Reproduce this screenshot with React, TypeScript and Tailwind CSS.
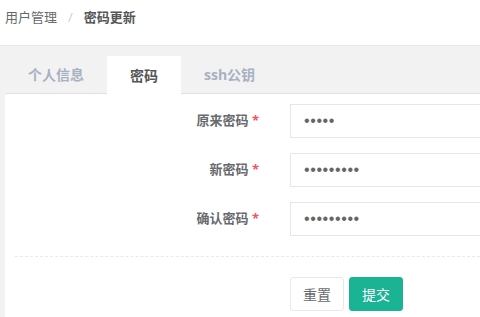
import React from 'react';

const font = { fontFamily: '"Open Sans", "Noto Sans CJK SC", sans-serif' };

const fields = [
    { label: '原来密码', value: '12345' },
    { label: '新密码', value: '123456789' },
    { label: '确认密码', value: '123456789' },
];

export default function App() {
    return (
        <div className="h-[317px] w-[480px] overflow-hidden bg-[#f2f2f2] text-[13px] text-[#676a6c]" style={font}>
            <div className="flex h-[46px] items-center border-b border-[#e7eaec] bg-white pb-[10px] pl-[5px]">
                <span className="text-[#676a6c]">用户管理</span>
                <span className="mx-[11px] text-[#ccc]">/</span>
                <span className="font-bold text-[#555]">密码更新</span>
            </div>
            <div className="pt-[10px]">
                <div className="ml-[5px] flex h-[38px] border-b border-[#e1e1e1]">
                    {['个人信息', '密码', 'ssh公钥'].map((tab) => (
                        <div
                            key={tab}
                            className={`flex items-center px-[23px] text-[14px] font-bold ${tab === '密码' ? 'mb-[-1px] bg-white text-[#555]' : 'text-[#a7b1c2]'}`}
                        >
                            {tab}
                        </div>
                    ))}
                </div>
                <div className="ml-[5px] overflow-hidden bg-white pb-[20px] pl-[10px] pt-[10px]">
                    <div className="flex flex-col gap-[15px]">
                        {fields.map((f) => (
                            <div key={f.label} className="flex items-center">
                                <label className="w-[275px] shrink-0 pr-[31px] text-right font-bold text-[#676a6c]">
                                    {f.label} <span className="text-[#ed5565]">*</span>
                                </label>
                                <input
                                    type="password"
                                    readOnly
                                    value={f.value}
                                    className="h-[34px] w-[230px] shrink-0 border border-[#e5e6e7] bg-white pl-[13px] pr-[12px] text-[16px] tracking-[0.6px] text-[#666] outline-none"
                                    style={{ fontFamily: '"Liberation Sans", sans-serif' }}
                                />
                            </div>
                        ))}
                    </div>
                    <div className="mt-[20px] border-t border-dashed border-[#e7eaec]" />
                    <div className="mt-[20px] flex gap-[5px] pl-[275px]">
                        <button className="h-[34px] rounded-[3px] border border-[#e7eaec] bg-white px-[12px] text-[14px] text-[#676a6c]">重置</button>
                        <button className="h-[34px] rounded-[3px] border border-[#1ab394] bg-[#1ab394] px-[12px] text-[14px] text-white">提交</button>
                    </div>
                </div>
            </div>
        </div>
    );
}
